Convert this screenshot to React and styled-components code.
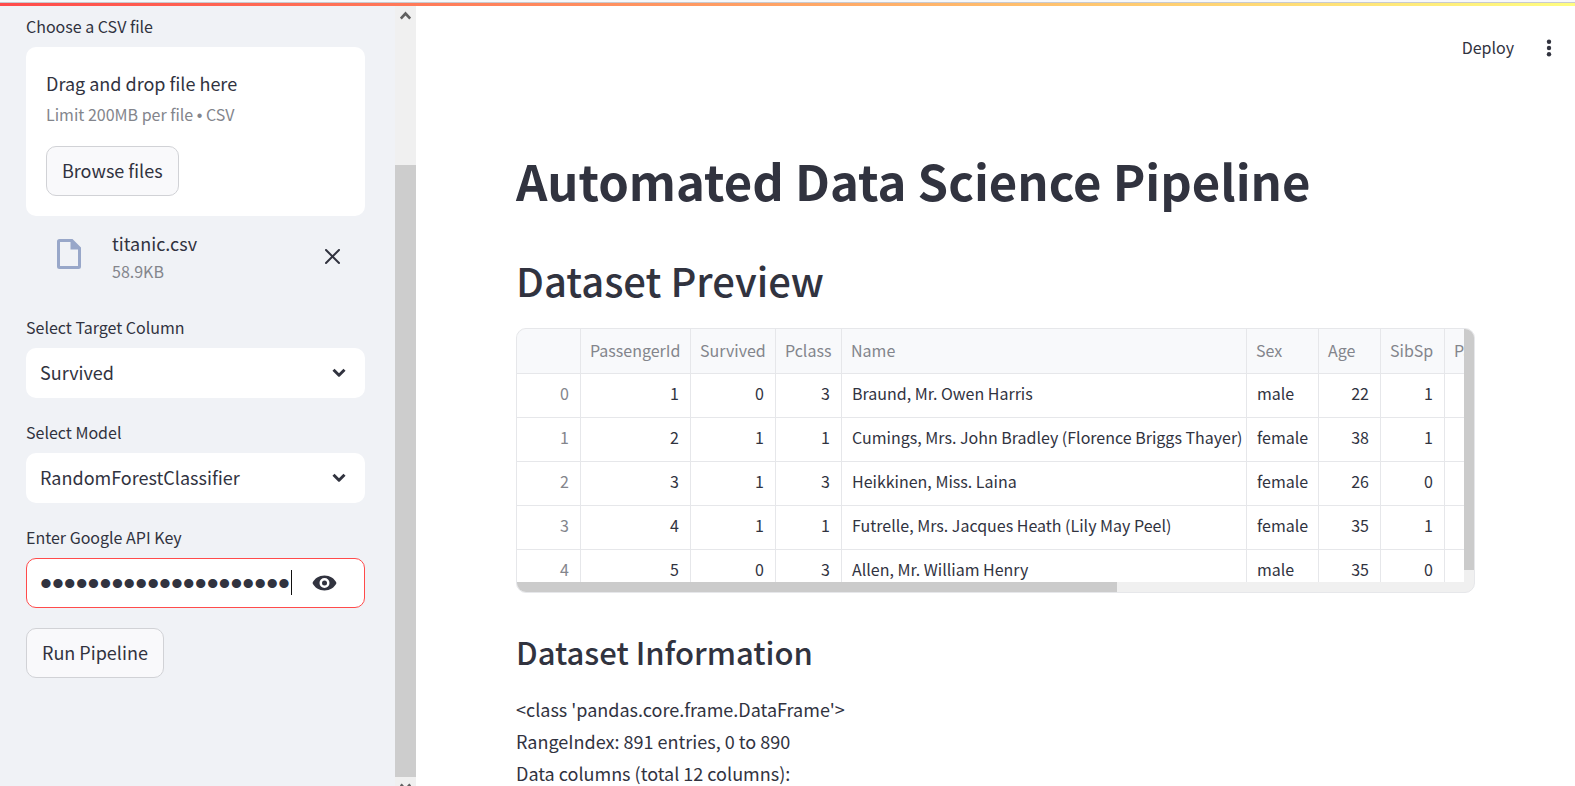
import React from "react";
import styled, { createGlobalStyle } from "styled-components";

const ink = "#31333f";
const muted = "#83858c";
const line = "#e6e7ea";

const GlobalStyle = createGlobalStyle`
  *, *::before, *::after { box-sizing: border-box; }
  body {
    margin: 0;
    background: #fff;
    color: ${ink};
    font-family: "Noto Sans CJK SC", "Noto Sans", sans-serif;
    font-size: 18px;
    line-height: 32px;
  }
  button, input, select { font: inherit; color: inherit; }
  h1, h2, h3, p { margin: 0; }
`;

const Page = styled.div`
  display: flex;
  flex-direction: column;
  height: 100vh;
  overflow: hidden;
`;

const TopEdge = styled.div`
  flex: none;
  height: 3px;
  background: #f7f8fa;
  border-bottom: 1px solid #c8cad0;
`;

const Decoration = styled.div`
  flex: none;
  height: 3px;
  background: linear-gradient(90deg, #ff4b4b, #fffd80);
`;

const Body = styled.div`
  flex: 1;
  min-height: 0;
  display: flex;
`;

const Sidebar = styled.aside`
  flex: none;
  width: 416px;
  display: flex;
  background: #f0f2f6;
`;

const SidebarContent = styled.form`
  flex: 1;
  min-width: 0;
  padding: 6px 30px 0 26px;
`;

const PageScroll = styled.div`
  flex: none;
  width: 21px;
  background: #f0f0f0;
  display: flex;
  flex-direction: column;
  overflow: hidden;
`;

const ScrollArrow = styled.span`
  flex: none;
  height: ${(p) => (p.$down ? 9 : 18)}px;
  padding-top: ${(p) => (p.$down ? 6 : 5)}px;
  display: flex;
  align-items: flex-start;
  justify-content: center;
  color: #606060;
`;

const PageTrack = styled.div`
  flex: 1;
  padding-top: 141px;
`;

const PageThumb = styled.div`
  height: 100%;
  background: #cdcdcd;
`;

const Label = styled.label`
  display: block;
  font-size: 16px;
  line-height: 28px;
  padding-bottom: 7px;
`;

const Field = styled.div`
  margin-bottom: 20px;
`;

const DropZone = styled.section`
  padding: 20px;
  border-radius: 10px;
  background: #fff;
`;

const DropHint = styled.p`
  font-size: 16px;
  line-height: 30px;
  color: ${muted};
  margin-bottom: 17px;
`;

const DropTitle = styled.p`
  line-height: 32px;
`;

const Bullet = styled.span`
  font-family: "Liberation Sans", sans-serif;
  line-height: 16px;
`;

const Button = styled.button`
  display: block;
  height: 50px;
  padding: 0 15px 2px;
  border: 1px solid #d1d2d6;
  border-radius: 10px;
  background: #f9f9fb;
  white-space: nowrap;
`;

const FileRow = styled.div`
  display: flex;
  align-items: center;
  padding: 13px 20px 0 30px;
  margin-bottom: 28px;
`;

const FileIcon = styled.span`
  display: flex;
  padding-bottom: 6px;
`;

const FileText = styled.div`
  flex: 1;
  padding-left: 30px;
  line-height: 28px;
`;

const FileSize = styled.div`
  font-size: 16px;
  color: ${muted};
`;

const IconButton = styled.button`
  display: flex;
  padding: 4px;
  border: 0;
  background: none;
`;

const SelectBox = styled.div`
  position: relative;
  height: 50px;
`;

const Select = styled.select`
  width: 100%;
  height: 50px;
  padding: 0 14px 2px;
  border: 0;
  border-radius: 10px;
  background: #fff;
  appearance: none;
`;

const Chevron = styled.svg`
  position: absolute;
  right: 19px;
  top: 20px;
  pointer-events: none;
`;

const SecretBox = styled.div`
  position: relative;
  height: 50px;
  display: flex;
  align-items: center;
  padding: 0 23px 0 13px;
  border: 1px solid #ff4b4b;
  border-radius: 10px;
  background: #fff;
`;

const SecretInput = styled.input`
  flex: 1;
  min-width: 0;
  height: 46px;
  padding: 0;
  border: 0;
  outline: 0;
  background: none;
  font-family: "Liberation Sans", sans-serif;
  font-size: 34px;
`;

const Caret = styled.span`
  position: absolute;
  left: 264px;
  top: 11px;
  width: 1px;
  height: 25px;
  background: #111;
`;

const Main = styled.main`
  flex: 1;
  min-width: 0;
`;

const Toolbar = styled.header`
  height: 84px;
  display: flex;
  align-items: center;
  justify-content: flex-end;
  gap: 22px;
  padding: 0 13px;
`;

const PlainButton = styled.button`
  padding: 0 0 2px;
  border: 0;
  background: none;
  font-size: 16px;
`;

const Content = styled.div`
  padding: 57px 100px 0;
`;

const Title = styled.h1`
  font-size: 49px;
  line-height: 66px;
  font-weight: 700;
  margin-bottom: 40px;
  white-space: nowrap;
`;

const Heading = styled.h2`
  font-size: 40px;
  line-height: 54px;
  font-weight: 500;
  margin-bottom: 21px;
`;

const Subheading = styled.h3`
  font-size: 31px;
  line-height: 42px;
  font-weight: 500;
  margin: 38px 0 20px;
`;

const GridFrame = styled.div`
  display: grid;
  grid-template-columns: minmax(0, 1fr) 10px;
  grid-template-rows: 253px 10px;
  border: 1px solid ${line};
  border-radius: 10px;
  overflow: hidden;
  background: #f0f0f0;
`;

const GridView = styled.div`
  overflow: auto;
  scrollbar-width: none;
  background: #fff;
`;

const Table = styled.table`
  width: 1011px;
  table-layout: fixed;
  border-collapse: separate;
  border-spacing: 0;
  font-size: 16px;
  line-height: 24px;
`;

const Cell = styled.td`
  height: 44px;
  padding: 0 ${(p) => (p.$number ? 11 : 0)}px 5px ${(p) => (p.$number ? 0 : 10)}px;
  border-right: 1px solid ${line};
  border-bottom: 1px solid ${line};
  text-align: ${(p) => (p.$number ? "right" : "left")};
  white-space: nowrap;
`;

const HeadCell = styled(Cell).attrs({ as: "th", scope: "col" })`
  height: 45px;
  padding: 0 9px 2px;
  background: #f8f9fb;
  color: ${muted};
  font-weight: 400;
`;

const RowHead = styled(Cell).attrs({ as: "th", scope: "row" })`
  color: ${muted};
  font-weight: 400;
`;

const VerticalThumb = styled.div`
  height: 241px;
  background: #cbcbcb;
`;

const HorizontalThumb = styled.div`
  width: 600px;
  background: #cbcbcb;
`;

const columns = [
  { name: "PassengerId", width: 110, number: true },
  { name: "Survived", width: 85, number: true },
  { name: "Pclass", width: 66, number: true },
  { name: "Name", width: 405 },
  { name: "Sex", width: 72 },
  { name: "Age", width: 62, number: true },
  { name: "SibSp", width: 64, number: true },
  { name: "Parch", width: 83, number: true },
];

const passengers = [
  [1, 0, 3, "Braund, Mr. Owen Harris", "male", 22, 1, 0],
  [2, 1, 1, "Cumings, Mrs. John Bradley (Florence Briggs Thayer)", "female", 38, 1, 0],
  [3, 1, 3, "Heikkinen, Miss. Laina", "female", 26, 0, 0],
  [4, 1, 1, "Futrelle, Mrs. Jacques Heath (Lily May Peel)", "female", 35, 1, 0],
  [5, 0, 3, "Allen, Mr. William Henry", "male", 35, 0, 0],
];

function SelectField({ id, label, options }) {
  return (
    <Field>
      <Label htmlFor={id}>{label}</Label>
      <SelectBox>
        <Select id={id}>
          {options.map((o) => (
            <option key={o}>{o}</option>
          ))}
        </Select>
        <Chevron width="14" height="10" viewBox="0 0 14 10" fill="none" stroke={ink} strokeWidth="3">
          <path d="M1.500 1.800L7 7.200l5.500-5.400" strokeLinejoin="round" />
        </Chevron>
      </SelectBox>
    </Field>
  );
}

function ArrowGlyph({ down }) {
  return (
    <svg width="11" height="9" viewBox="0 0 11 9" fill="none" stroke="currentColor" strokeWidth="2.6">
      <path d={down ? "M0.8 1.5l4.7 5 4.7-5" : "M0.8 7.5l4.7-5 4.7 5"} />
    </svg>
  );
}

function SidebarPanel() {
  return (
    <Sidebar>
      <SidebarContent onSubmit={(e) => e.preventDefault()}>
        <Label as="div">Choose a CSV file</Label>
        <DropZone>
          <DropTitle>Drag and drop file here</DropTitle>
          <DropHint>
            Limit 200MB per file <Bullet>•</Bullet> CSV
          </DropHint>
          <Button type="button">Browse files</Button>
        </DropZone>
        <FileRow>
          <FileIcon>
            <svg width="26" height="32" viewBox="0 0 26 32">
              <path
                fill="#98a7c9"
                fillRule="evenodd"
                d="M3.500 1H16.500L25 9.500V28.500a2.500 2.500 0 0 1-2.500 2.500H3.500a2.500 2.500 0 0 1-2.500-2.500V3.500A2.500 2.500 0 0 1 3.500 1zM4 4v24h18V11.500h-7.500V4z"
              />
            </svg>
          </FileIcon>
          <FileText>
            <div>titanic.csv</div>
            <FileSize>58.9KB</FileSize>
          </FileText>
          <IconButton type="button" aria-label="Remove titanic.csv">
            <svg width="16" height="16" viewBox="0 0 16 16" stroke={ink} strokeWidth="2" strokeLinecap="round">
              <path d="M1 1l13 13M14 1l-13 13" />
            </svg>
          </IconButton>
        </FileRow>
        <SelectField id="target" label="Select Target Column" options={["Survived"]} />
        <SelectField id="model" label="Select Model" options={["RandomForestClassifier"]} />
        <Field>
          <Label htmlFor="key">Enter Google API Key</Label>
          <SecretBox>
            <SecretInput id="key" type="password" defaultValue={"x".repeat(21)} />
            <Caret />
            <IconButton type="button" aria-label="Show password">
              <svg width="25" height="16" viewBox="0 0 25 16">
                <path
                  fill={ink}
                  fillRule="evenodd"
                  d="M12.500 0.500C7 0.500 2.600 3.400 0.500 8c2.100 4.600 6.500 7.500 12 7.500s9.900-2.900 12-7.500C22.400 3.400 18 0.500 12.500 0.500zm0 12.500a5 5 0 1 1 0-10 5 5 0 0 1 0 10z"
                />
                <circle cx="12.500" cy="8" r="2.500" fill={ink} />
              </svg>
            </IconButton>
          </SecretBox>
        </Field>
        <Button type="submit">Run Pipeline</Button>
      </SidebarContent>
      <PageScroll aria-hidden="true">
        <ScrollArrow><ArrowGlyph /></ScrollArrow>
        <PageTrack>
          <PageThumb />
        </PageTrack>
        <ScrollArrow $down><ArrowGlyph down /></ScrollArrow>
      </PageScroll>
    </Sidebar>
  );
}

function DataGrid() {
  return (
    <GridFrame>
      <GridView>
        <Table>
          <colgroup>
            <col style={{ width: 64 }} />
            {columns.map((c) => (
              <col key={c.name} style={{ width: c.width }} />
            ))}
          </colgroup>
          <thead>
            <tr>
              <HeadCell aria-label="Index" />
              {columns.map((c) => (
                <HeadCell key={c.name}>{c.name}</HeadCell>
              ))}
            </tr>
          </thead>
          <tbody>
            {passengers.map((row, i) => (
              <tr key={row[0]}>
                <RowHead $number>{i}</RowHead>
                {row.map((value, j) => (
                  <Cell key={columns[j].name} $number={columns[j].number}>{value}</Cell>
                ))}
              </tr>
            ))}
          </tbody>
        </Table>
      </GridView>
      <VerticalThumb />
      <HorizontalThumb />
    </GridFrame>
  );
}

export default function App() {
  return (
    <>
      <GlobalStyle />
      <Page>
        <TopEdge />
        <Decoration />
        <Body>
          <SidebarPanel />
          <Main>
            <Toolbar>
              <PlainButton type="button">Deploy</PlainButton>
              <IconButton type="button" aria-label="Main menu">
                <svg width="18" height="18" viewBox="0 0 18 18" fill={ink}>
                  <circle cx="9" cy="2.800" r="2.200" />
                  <circle cx="9" cy="9" r="2.200" />
                  <circle cx="9" cy="15.200" r="2.200" />
                </svg>
              </IconButton>
            </Toolbar>
            <Content>
              <Title>Automated Data Science Pipeline</Title>
              <Heading>Dataset Preview</Heading>
              <DataGrid />
              <Subheading>Dataset Information</Subheading>
              <p>&lt;class 'pandas.core.frame.DataFrame'&gt;</p>
              <p>RangeIndex: 891 entries, 0 to 890</p>
              <p>Data columns (total 12 columns):</p>
            </Content>
          </Main>
        </Body>
      </Page>
    </>
  );
}
